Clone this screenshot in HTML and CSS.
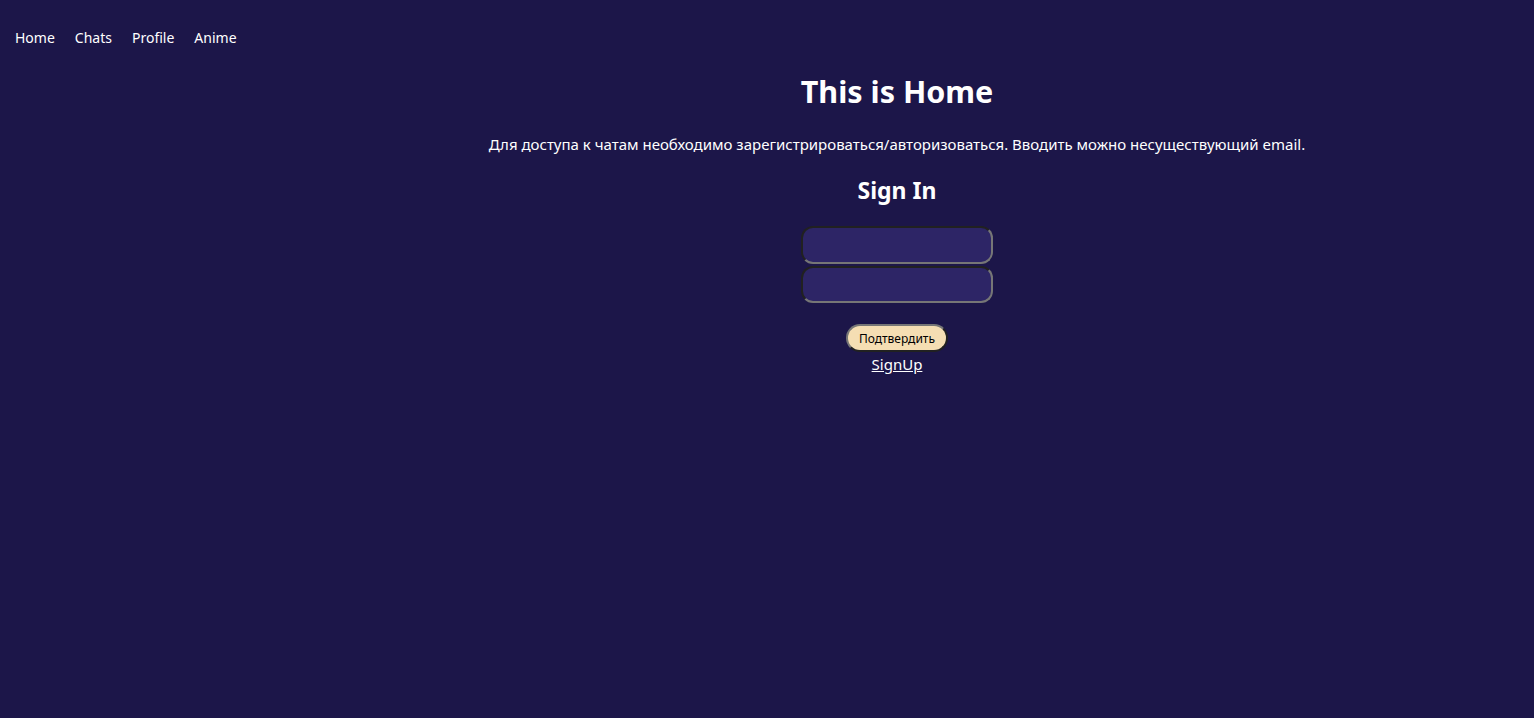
FILE: index.html
```html
<!DOCTYPE html>
<html lang="ru">
<head>
<meta charset="utf-8">
<title>Home</title>
<link rel="stylesheet" href="styles.css">
</head>
<body>
<div class="app">
  <nav class="nav">
    <a class="nav-link" href="#">Home</a>
    <a class="nav-link" href="#">Chats</a>
    <a class="nav-link" href="#">Profile</a>
    <a class="nav-link" href="#">Anime</a>
  </nav>
  <main class="main">
    <h1 class="title">This is Home</h1>
    <p class="note">Для доступа к чатам необходимо зарегистрироваться/авторизоваться. Вводить можно несуществующий email.</p>
    <h2 class="subtitle">Sign In</h2>
    <form class="form">
      <input class="field" type="email">
      <input class="field" type="password">
      <button class="submit" type="button">Подтвердить</button>
    </form>
    <a class="signup" href="#">SignUp</a>
  </main>
</div>
</body>
</html>
```
FILE: styles.css
```css
html, body {
  margin: 0;
  padding: 0;
  background: #1c1649;
  color: #ffffff;
  font-family: "Noto Sans", "Open Sans", sans-serif;
  height: 100%;
}
.app {
  display: flex;
  min-height: 100vh;
}
.nav {
  width: 260px;
  display: flex;
  gap: 20px;
  padding: 28px 0 0 15px;
  box-sizing: border-box;
  align-items: flex-start;
}
.nav-link {
  color: #ffffff;
  text-decoration: none;
  font-size: 14px;
  line-height: 20px;
}
.main {
  flex: 1;
  display: flex;
  flex-direction: column;
  align-items: center;
  padding-top: 71px;
  text-align: center;
}
.title {
  margin: 0;
  font-size: 30.5px;
  line-height: 40px;
  font-weight: 700;
}
.note {
  margin: 23px 0 0;
  font-size: 15px;
  line-height: 20px;
}
.subtitle {
  margin: 20px 0 0;
  font-size: 23px;
  line-height: 32px;
  font-weight: 700;
}
.form {
  margin-top: 20px;
  display: flex;
  flex-direction: column;
  align-items: center;
  gap: 2px;
}
.field {
  width: 192px;
  height: 37px;
  box-sizing: border-box;
  background: #2d2566;
  border: 2px inset #767676;
  border-radius: 12px;
  color: #fff;
}
.field:first-child {
  height: 38px;
}
.submit {
  margin-top: 19px;
  background: #f5deb3;
  color: #000;
  border: 2px outset #767676;
  border-radius: 14px;
  font-family: "Noto Sans", sans-serif;
  font-size: 12px;
  height: 28px;
  padding: 0 11px;
}
.signup {
  color: #fff;
  text-decoration: underline;
  font-size: 15px;
  line-height: 20px;
  margin-top: 2px;
}
```
